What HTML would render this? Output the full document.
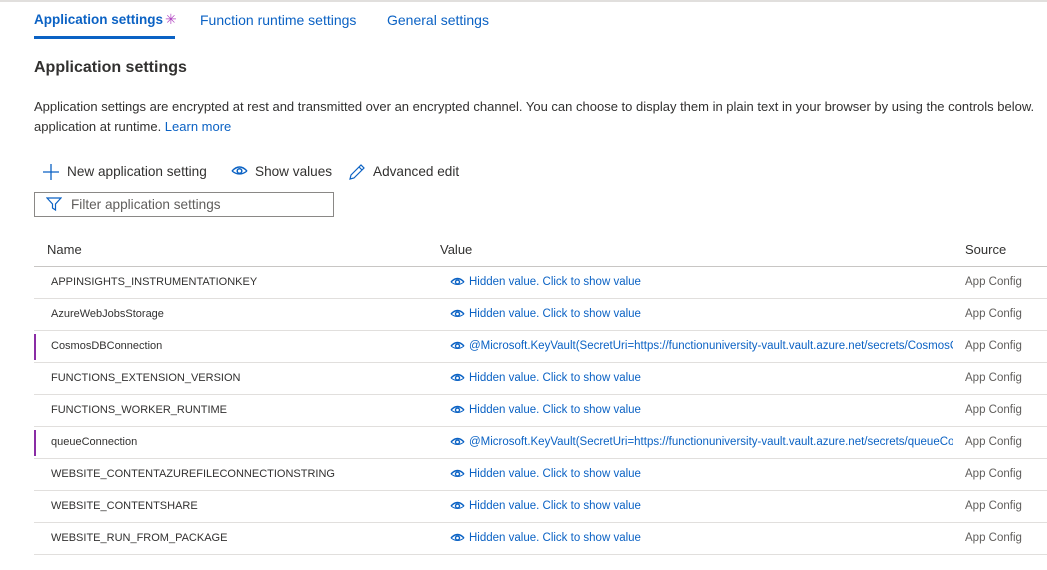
<!DOCTYPE html>
<html><head><style>
body{margin:0;width:1047px;height:570px;overflow:hidden;background:#fff;font-family:"Liberation Sans",sans-serif;color:#323130;position:relative}
.a{position:absolute;white-space:nowrap}
.blue{color:#0b62c4}
.row{position:absolute;left:34px;width:1013px;height:32px;border-bottom:1px solid #e1dfdd;font-size:11.5px}
.row span{position:absolute;top:10px;white-space:nowrap}
.n{left:17px;font-size:11px}
.v{left:435px;color:#0b62c4;width:484px;overflow:hidden}
.s{left:931px;color:#605e5c}
.kv{position:absolute;left:0;top:4px;width:2px;height:26px;background:#8a2da5}
</style></head><body>
<div class="a" style="left:0;top:0;width:1047px;height:2px;background:#e1dfdd"></div>
<div class="a blue" style="left:34px;top:12px;font-size:13.5px;font-weight:bold">Application settings</div>
<div class="a" style="left:165px;top:11px;font-size:14px;color:#b146c2">✳</div>
<div class="a" style="left:34px;top:36px;width:141px;height:3px;background:#0b62c4"></div>
<div class="a blue" style="left:200px;top:12px;font-size:14px">Function runtime settings</div>
<div class="a blue" style="left:387px;top:12px;font-size:14px">General settings</div>
<div class="a" style="left:34px;top:59px;font-size:16px;font-weight:bold">Application settings</div>
<div class="a" style="left:34px;top:97px;font-size:13px;line-height:20px">Application settings are encrypted at rest and transmitted over an encrypted channel. You can choose to display them in plain text in your browser by using the controls below.<br>application at runtime. <span class="blue">Learn more</span></div>
<svg class="a" style="left:42px;top:163px" width="18" height="18"><path d="M9 1V17M1 9H17" stroke="#0b62c4" stroke-width="1.3"/></svg>
<div class="a" style="left:67px;top:164px;font-size:13.6px">New application setting</div>
<svg class="a" style="left:231px;top:165px" width="17" height="12"><path d="M1 6Q8.5-2 16 6" fill="none" stroke="#0b62c4" stroke-width="1.5"/><path d="M1 6Q8.5 12 16 6" fill="none" stroke="#0b62c4" stroke-width="1.2"/><circle cx="8.5" cy="6" r="2.3" fill="none" stroke="#0b62c4" stroke-width="1.5"/></svg>
<div class="a" style="left:255px;top:164px;font-size:13.6px">Show values</div>
<svg class="a" style="left:348px;top:163px" width="18" height="18"><path d="M2 16L3 12L13 2L16 5L6 15Z M11 4L14 7" fill="none" stroke="#0b62c4" stroke-width="1.2"/></svg>
<div class="a" style="left:373px;top:164px;font-size:13.6px">Advanced edit</div>
<div class="a" style="left:34px;top:192px;width:298px;height:23px;border:1px solid #8a8886"></div>
<svg class="a" style="left:46px;top:196px" width="16" height="16"><path d="M1 2H15L9.5 8V14L6.5 12V8Z" fill="none" stroke="#0b62c4" stroke-width="1.2"/></svg>
<div class="a" style="left:71px;top:197px;font-size:13.6px;color:#605e5c">Filter application settings</div>
<div class="a" style="left:47px;top:242px;font-size:13px">Name</div>
<div class="a" style="left:440px;top:242px;font-size:13px">Value</div>
<div class="a" style="left:965px;top:242px;font-size:13px">Source</div>
<div class="a" style="left:34px;top:266px;width:1013px;height:1px;background:#c8c6c4"></div>
<div id="rows"></div>
<script>
var eye='<svg width="15" height="10" style="position:absolute;left:-19px;top:0px"><path d="M1 5Q7.5-2 14 5" fill="none" stroke="#0b62c4" stroke-width="1.4"/><path d="M1 5Q7.5 10 14 5" fill="none" stroke="#0b62c4" stroke-width="1"/><circle cx="7.5" cy="5" r="2" fill="none" stroke="#0b62c4" stroke-width="1.4"/></svg>';
var R=[["APPINSIGHTS_INSTRUMENTATIONKEY",0],["AzureWebJobsStorage",0],["CosmosDBConnection","Cosmos"],["FUNCTIONS_EXTENSION_VERSION",0],["FUNCTIONS_WORKER_RUNTIME",0],["queueConnection","queue"],["WEBSITE_CONTENTAZUREFILECONNECTIONSTRING",0],["WEBSITE_CONTENTSHARE",0],["WEBSITE_RUN_FROM_PACKAGE",0]];
var h='';
R.forEach(function(r,i){
 var v=r[1]?'@Microsoft.KeyVault(SecretUri=https://functionuniversity-vault.vault.azure.net/secrets/'+r[1]+'Connection)':'Hidden value. Click to show value';
 h+='<div class="row" style="top:'+(266+i*32)+'px">'+(r[1]?'<div class="kv"></div>':'')+'<span class="n">'+r[0]+'</span><span class="v">'+v+'</span><span style="position:absolute;left:435px;top:11px">'+eye+'</span><span class="s">App Config</span></div>';
});
document.getElementById('rows').innerHTML=h;
</script>
</body></html>
